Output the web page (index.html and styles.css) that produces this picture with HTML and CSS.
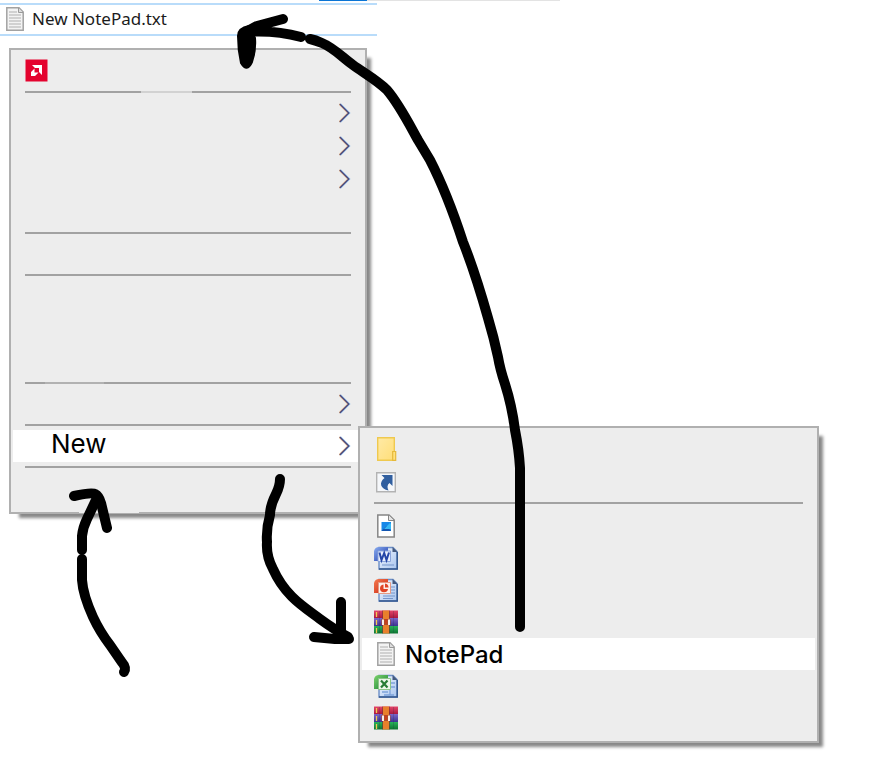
FILE: index.html
```html
<!DOCTYPE html>
<html lang="en">
<head>
<meta charset="utf-8">
<title>New NotePad.txt</title>
<link rel="stylesheet" href="styles.css">
</head>
<body>
<svg class="defs" aria-hidden="true">
  <defs>
    <linearGradient id="folder" x2="1" y2="1"><stop stop-color="#ffeaa6"/><stop offset="1" stop-color="#ffde78"/></linearGradient>
    <linearGradient id="paper" x2="1" y2="1"><stop stop-color="#f4f8ff"/><stop offset="1" stop-color="#a9c5ee"/></linearGradient>
    <linearGradient id="word" x2="1" y2="1"><stop stop-color="#8caef0"/><stop offset="1" stop-color="#1937a8"/></linearGradient>
    <linearGradient id="slides" x2="1" y2="1"><stop stop-color="#f57b50"/><stop offset="1" stop-color="#c92410"/></linearGradient>
    <linearGradient id="sheet" x2="1" y2="1"><stop stop-color="#7ed36e"/><stop offset="1" stop-color="#168030"/></linearGradient>
    <linearGradient id="red" x2="0" y2="1"><stop stop-color="#e4466a"/><stop offset="1" stop-color="#a9193f"/></linearGradient>
    <linearGradient id="violet" x2="0" y2="1"><stop stop-color="#7b66c9"/><stop offset="1" stop-color="#3c3490"/></linearGradient>
    <linearGradient id="green" x2="0" y2="1"><stop stop-color="#28b35a"/><stop offset="1" stop-color="#0e7431"/></linearGradient>
    <symbol id="chevron" viewBox="0 0 12 20"><path d="M0 1L9 10L0 19" fill="none" stroke="#e9b98c" stroke-width="1.5"/><path d="M1.500 1L10.500 10L1.500 19" fill="none" stroke="#8fc4f2" stroke-width="1.5"/><path d="M.8 1L9.800 10L.8 19" fill="none" stroke="#4b4678" stroke-width="1.3"/></symbol>
    <symbol id="text-file" viewBox="0 0 24 24"><path d="M3.8 .8H16L20.2 5V23.2H3.8Z" fill="#f3f3f3" stroke="#a2a2a2" stroke-width="1.5"/><path d="M15.5 1V5.5H20" fill="#ddd" stroke="#999"/><path d="M6 5H14M6 8H18M6 11H18M6 14H18M6 17H18M6 20H18" stroke="#b0b0b0" stroke-width="1.2"/></symbol>
    <symbol id="office-page" viewBox="0 0 24 24"><path d="M5 1.5H19L23 5.500V23H5Z" fill="url(#paper)" stroke="#6d8fc7" stroke-width="1.4"/><path d="M5 23H23.300V6" fill="none" stroke="#34588f" stroke-width="1.5"/><path d="M18.500 1L23.500 6H18.500Z" fill="#45597d"/></symbol>
    <symbol id="archive" viewBox="0 0 24 24"><path d="M0 .5H24V8H0Z" fill="url(#red)"/><path d="M0 8H24V16H0Z" fill="url(#violet)"/><path d="M0 16H24V23.500H0Z" fill="url(#green)"/><path d="M9 .5H15V23.500H9Z" fill="#e8802c"/><path d="M8.500 .5V23.500M15.500 .5V23.500" stroke="#7a3430" opacity=".6"/><path d="M2.500 2V7M2.500 10V15M2.500 18V23" stroke="#f4c951" stroke-width="1.3"/><path d="M5.500 1V23M19.500 1V23" stroke="#20264a" opacity=".2"/><path d="M7.500 15V9H16.500V15Z" fill="#b04c2a"/><path d="M9 15V9.500M15 15V9.500" fill="none" stroke="#f7f1ec" stroke-width="2"/><path d="M12 9V14" stroke="#d03b1c" stroke-width="1.4"/></symbol>
  </defs>
</svg>

<div class="topline"></div>
<div class="file">
  <svg class="icon"><use href="#text-file"/></svg>
  <span class="file-name">New NotePad.txt</span>
</div>

<div class="menu main-menu">
  <div class="group">
    <div class="row">
      <svg class="icon" viewBox="0 0 24 24"><path d="M.5 .5H22.500V22.500H.5Z" fill="#e4032e"/><path d="M7 6H17V16L14 13V9H10Z" fill="#fff"/><path d="M9.500 9.500L6 13V17H10L13.500 13.500H9.500Z" fill="#fff"/></svg>
    </div>
  </div>
  <hr class="sep sep-worn-top">
  <div class="group">
    <div class="row"><svg class="chevron"><use href="#chevron"/></svg></div>
    <div class="row"><svg class="chevron"><use href="#chevron"/></svg></div>
    <div class="row"><svg class="chevron"><use href="#chevron"/></svg></div>
    <div class="row"></div>
  </div>
  <hr class="sep">
  <div class="group"><div class="row"></div></div>
  <hr class="sep">
  <div class="group">
    <div class="row"></div>
    <div class="row"></div>
    <div class="row"></div>
  </div>
  <hr class="sep sep-worn-low">
  <div class="group">
    <div class="row"><svg class="chevron"><use href="#chevron"/></svg></div>
  </div>
  <hr class="sep">
  <div class="group">
    <div class="row active">
      <button class="label label-new" type="button">New</button>
      <svg class="chevron"><use href="#chevron"/></svg>

      <div class="menu submenu">
        <div class="group">
          <div class="row">
            <svg class="icon" viewBox="0 0 24 24"><path d="M3.700 .7H20.300V23.300H3.700Z" fill="url(#folder)" stroke="#efc94f" stroke-width="1.400"/><path d="M18.700 14.500H21.700V23.300H18.700Z" fill="#ffe17f" stroke="#e6b93b" stroke-width="1.200"/></svg>
          </div>
          <div class="row">
            <svg class="icon" viewBox="0 0 24 24"><path d="M2.700 2.700H21.300V21.800H2.700Z" fill="#f5f7fa" stroke="#b3b3b3" stroke-width="1.400"/><path d="M7.500 5H18.500V16L15.500 13C13 15 13 17.500 14.500 20.500C6.500 19 4.500 12.500 10.500 8Z" fill="#315f9f"/></svg>
          </div>
        </div>
        <hr class="sep">
        <div class="group group-tight">
          <div class="row">
            <svg class="icon" viewBox="0 0 24 24"><path d="M3.800 1H15L20.200 6V23H3.800Z" fill="#fff" stroke="#858585" stroke-width="1.500"/><path d="M14.500 1V6.500H20" fill="#e5e5e5" stroke="#858585"/><path d="M7.500 8H17V17H7.500Z" fill="#1688e8"/><path d="M7.500 17L12.500 12L17 17Z" fill="#1254b0"/><path d="M10 15L16 9L17 10V15Z" fill="#36b9f4"/></svg>
          </div>
          <div class="row">
            <svg class="icon" viewBox="0 0 24 24"><use href="#office-page"/><path d="M8 19H20" stroke="#7595cb"/><path d="M0 5Q1 1 5 1H14V5H4V15H0Z" fill="url(#word)"/><path d="M4 5H16.500V15.500H4Z" fill="#e9effd" stroke="#8ba5da"/><path d="M5.500 6.500L7.500 14L10.200 7L12.500 14L15 6.500" fill="none" stroke="#2446a8" stroke-width="2"/></svg>
          </div>
          <div class="row">
            <svg class="icon" viewBox="0 0 24 24"><use href="#office-page"/><path d="M17 9H21M17 12H21M17 15H21M9 18H21M9 20.500H19" stroke="#7595cb"/><path d="M0 5Q1 1 5 1H14V5H5V15H0Z" fill="url(#slides)"/><path d="M4.500 4.500H16.500V15.500H4.500Z" fill="#fdf0eb" stroke="#e49a85"/><path d="M9.500 6.500V11H14Q13.500 14.300 10 14.300Q6 14 6 10.500Q6 7 9.500 6.500Z" fill="#e04526"/><path d="M11 5.500Q14.500 6 14.500 9.500H11Z" fill="#e04526"/></svg>
          </div>
          <div class="row"><svg class="icon"><use href="#archive"/></svg></div>
          <div class="row active">
            <svg class="icon"><use href="#text-file"/></svg>
            <button class="label label-file" type="button">NotePad</button>
          </div>
          <div class="row">
            <svg class="icon" viewBox="0 0 24 24"><use href="#office-page"/><path d="M17 9H21M17 13H21M8 18H14M16 16V21M10 21H20" stroke="#7da2da" stroke-width="1.300"/><path d="M0 5Q1 1 5 1H14V5H5V15H0Z" fill="url(#sheet)"/><path d="M4.500 4.500H16.500V15.500H4.500Z" fill="#edf7e9" stroke="#8cc588"/><path d="M7 6.500L13.500 13.500M13.500 6.500L7 13.500" stroke="#287c35" stroke-width="2.200"/></svg>
          </div>
          <div class="row"><svg class="icon"><use href="#archive"/></svg></div>
        </div>
      </div>
    </div>
  </div>
  <hr class="sep">
  <div class="group"><div class="row"></div></div>
</div>

<svg class="arrows" viewBox="0 0 871 768" aria-hidden="true">
  <path class="worn-edge" d="M79 512H139"/>
  <path d="M124 672Q127 668 121 661L110 645Q100 632 93 617Q83 595 82 580V559"/>
  <path d="M82 550V536Q83 527 87 519L96 500"/>
  <path d="M74 496Q92 492 95 494Q99 496 101 503L107 528"/>
  <path d="M280 479Q280 486 276 494Q270 506 270 515Q266 529 267 542Q266 556 273 569C285 596 304 607 320 619Q335 630 348 637"/>
  <path d="M341 602V633M314 637L335 639H349"/>
  <path d="M520 627V468Q519 450 515 430Q512 406 505 384Q500 369 498 357Q494 338 488 318Q475 272 463 242Q447 193 430 160L418 140C408 122 399 104 387 90C377 80 364 73 353 65C342 57 334 48 322 43Q315 40 310 39"/>
  <path d="M301 37Q275 30 246 32M283 19L257 26L246 32"/>
  <path class="arrow-fill" d="M238 36Q238 28 249 26L255 38Q256 51 252 62Q247 73 241 63Q238 50 238 36Z"/>
</svg>
</body>
</html>
```
FILE: styles.css
```css
* { box-sizing: border-box; }

body {
  position: relative;
  margin: 0;
  min-height: 100vh;
  background: #fff;
  color: #000;
  font-family: Inter, "Liberation Sans", sans-serif;
}

.defs {
  position: absolute;
  width: 0;
  height: 0;
}

.topline {
  width: 241px;
  height: 1px;
  margin: 0 0 2px 319px;
  background: linear-gradient(to right, #0a74d4 48px, #e3e3e3 48px);
}

.file {
  display: flex;
  align-items: center;
  gap: 5px;
  width: 377px;
  height: 33px;
  padding: 0 0 2px 3px;
  border: solid #b9dcfa;
  border-width: 2px 0;
}

.file-name {
  font: 17px/24px "Noto Sans", "Open Sans", sans-serif;
  color: #1c1c1c;
}

.menu {
  padding: 5px 2px 8px;
  border: 2px solid #b0b0b0;
  background: #ededed;
  box-shadow: 7px 7px 3px -3px #888;
}

.main-menu {
  width: 358px;
  margin: 12px 0 0 9px;
}

.submenu {
  position: absolute;
  top: -4px;
  left: calc(100% - 5px);
  width: 461px;
  padding-bottom: 7px;
}

.group {
  display: flex;
  flex-direction: column;
  gap: 1px;
}

.group-tight {
  gap: 0;
  padding-top: 2px;
}

.row {
  position: relative;
  display: flex;
  align-items: center;
  height: 32px;
  padding: 0 12px;
}

.active { background: #fff; }

.sep {
  height: 2px;
  margin: 4px 12px;
  border: 0;
  background: #a2a2a2;
}

.sep-worn-top {
  background: linear-gradient(to right, #a2a2a2 116px, #d2d2d2 116px, #d2d2d2 167px, #a2a2a2 167px);
}

.sep-worn-low {
  background: linear-gradient(to right, #a2a2a2 20px, #b2b2b2 20px, #b2b2b2 79px, #a2a2a2 79px);
}

.icon {
  flex: none;
  width: 24px;
  height: 24px;
}

.chevron {
  width: 12px;
  height: 20px;
  margin-left: auto;
}

.label {
  padding: 0;
  border: 0;
  background: none;
  color: #000;
  font: 500 24px/32px Inter, "Liberation Sans", sans-serif;
}

.label-new {
  margin-left: 26px;
  padding-bottom: 4px;
  font-size: 26px;
  font-weight: 400;
}

.label-file {
  margin-left: 7px;
  padding-top: 2px;
}

.arrows {
  position: absolute;
  top: 0;
  left: 0;
  width: 871px;
  height: 768px;
  fill: none;
  stroke: #000;
  stroke-width: 10px;
  stroke-linecap: round;
  stroke-linejoin: round;
  pointer-events: none;
}

.arrow-fill {
  fill: #000;
  stroke-width: 2px;
}

.worn-edge {
  stroke: #ededed;
  stroke-width: 2px;
  stroke-linecap: butt;
}
```
